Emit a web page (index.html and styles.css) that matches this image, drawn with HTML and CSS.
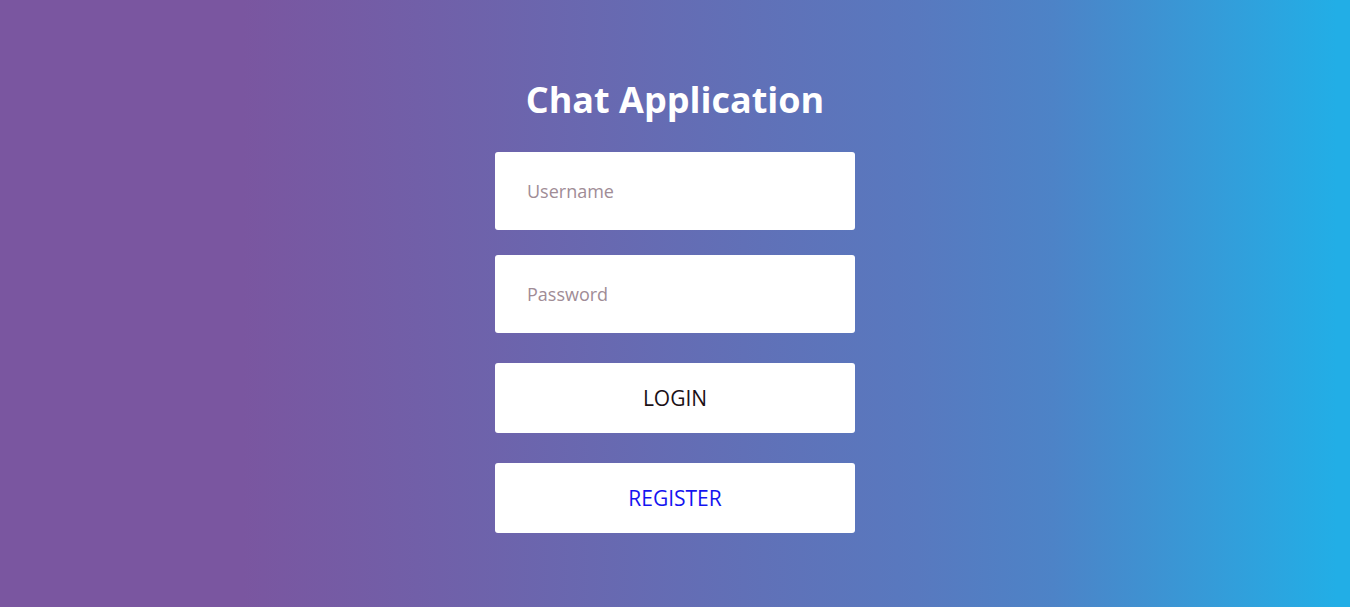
FILE: index.html
```html
<!DOCTYPE html>
<html lang="en">
<head>
  <meta charset="UTF-8">
  <meta name="viewport" content="width=device-width, initial-scale=1.0">
  <title>Chat Application</title>
  <link rel="stylesheet" href="styles.css">
</head>
<body>

  <div class="login-box">
    <h1>Chat Application</h1>
    <form class="login-form" onsubmit="return false">
      <input type="text" id="username" placeholder="Username">
      <input type="password" id="password" placeholder="Password">
      <button type="submit" class="btn-login">LOGIN</button>
      <button type="button" class="btn-register">REGISTER</button>
    </form>
  </div>

</body>
</html>
```

FILE: styles.css
```css
html, body {
  margin: 0;
  height: 100%;
}
body {
  font-family: "Open Sans", "Noto Sans", sans-serif;
  background: linear-gradient(to right, #7a56a0 18%, #5879bf 68%, #4d83c7 78%, #22aee6 99%);
}
.login-box {
  width: 360px;
  margin: 0 auto;
  padding-top: 76px;
}
h1 {
  margin: 0 0 28px;
  color: #fff;
  font-size: 36px;
  font-weight: 700;
  text-align: center;
  line-height: 48px;
}
.login-form {
  display: flex;
  flex-direction: column;
}
.login-form input {
  height: 78px;
  box-sizing: border-box;
  padding: 0 32px;
  margin-bottom: 25px;
  border: none;
  border-radius: 3px;
  background: #fff;
  font-family: inherit;
  font-size: 18px;
  outline: none;
}
.login-form input::placeholder {
  color: #a08c96;
}
.login-form input#password {
  margin-bottom: 30px;
}
.login-form button {
  height: 70px;
  margin-bottom: 30px;
  border: none;
  border-radius: 3px;
  background: #fff;
  font-family: inherit;
  font-size: 21px;
  cursor: pointer;
}
.btn-login {
  color: #1c1116;
}
.btn-register {
  color: #1414f0;
}
```
